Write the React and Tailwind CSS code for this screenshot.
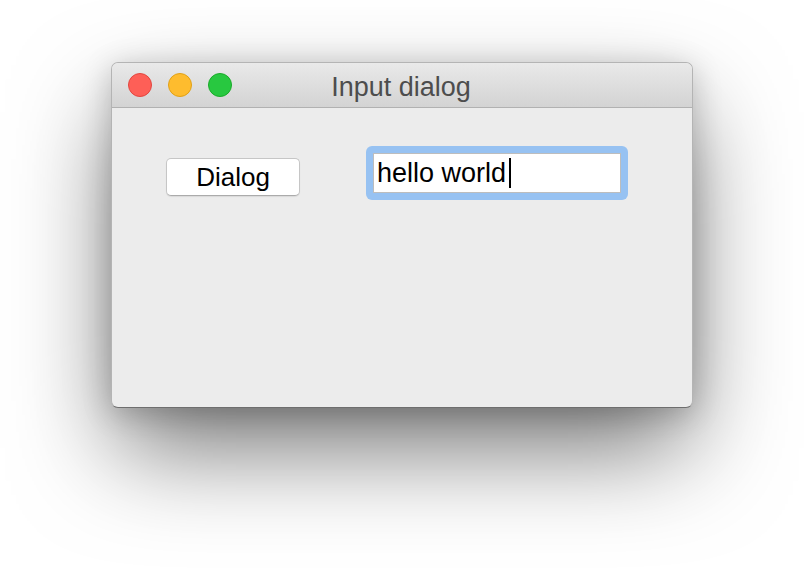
export default function App() {
  return (
    <div className="w-[804px] h-[568px] bg-white overflow-hidden pl-[111px] pt-[62px]" style={{ fontFamily: '"Liberation Sans", Arial, sans-serif' }}>
      <div className="w-[582px] h-[346px] rounded-[7px] border border-[#b4b4b4] border-b-[#6e6e6e] bg-[#ececec] overflow-hidden shadow-[0_45px_100px_-5px_rgba(0,0,0,0.55),0_5px_30px_rgba(0,0,0,0.2)] flex flex-col">
        <div className="h-[45px] shrink-0 border-b border-[#b1b1b1] bg-gradient-to-b from-[#e9e9e9] to-[#d3d3d3] grid grid-cols-[1fr_auto_1fr] items-center">
          <div className="flex items-center gap-[16px] pl-[16px]">
            <div className="w-[24px] h-[24px] rounded-full bg-[#fe5f57] border border-[#e2463f]" />
            <div className="w-[24px] h-[24px] rounded-full bg-[#febc2e] border border-[#e1a116]" />
            <div className="w-[24px] h-[24px] rounded-full bg-[#28c840] border border-[#1aab29]" />
          </div>
          <div className="text-[27px] leading-none text-[#4d4d4d] pt-[4px] pr-[2px]">Input dialog</div>
          <div />
        </div>
        <div className="flex-1 flex items-start pl-[54px] pt-[38px]">
          <div className="mt-[12px] w-[134px] h-[38px] rounded-[5px] bg-white border border-[#c6c6c6] border-b-[#ababab] shadow-[0_1px_1px_rgba(0,0,0,0.08)] flex items-center justify-center text-[26px] leading-none text-black">
            Dialog
          </div>
          <div className="ml-[66px] w-[262px] h-[54px] rounded-[6px] bg-[#97c2f2] p-[7px]">
            <div className="w-full h-full bg-white border border-[#bdbdbd] flex items-center pl-[3px] text-[27px] leading-none text-black">
              <span>hello world</span>
              <span className="ml-[3px] w-[2px] h-[30px] bg-black" />
            </div>
          </div>
        </div>
      </div>
    </div>
  );
}
